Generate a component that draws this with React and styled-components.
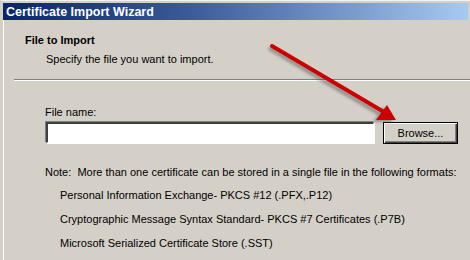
import React from "react";
import styled, { createGlobalStyle } from "styled-components";

const Global = createGlobalStyle`
  html, body { margin: 0; padding: 0; background: #d4d0c8; }
  body { font-family: Tahoma, "Liberation Sans", Arial, sans-serif; font-size: 11px; color: #000; }
`;

const Window = styled.div`
  position: relative;
  width: 470px;
  height: 260px;
  box-sizing: border-box;
  background: #d4d0c8;
  border-top: 1px solid #f4f3ef;
  border-left: 3px solid #d4d0c8;
  box-shadow: inset 1px 0 0 #ffffff;
  overflow: hidden;
  display: flex;
  flex-direction: column;
`;

const TopEdge = styled.div`
  height: 2px;
  background: #d4d0c8;
`;

const TitleBar = styled.div`
  height: 17px;
  margin-right: 2px;
  display: flex;
  align-items: center;
  padding-left: 3px;
  background: linear-gradient(to right, #0a246a 0%, #3a5a9a 40%, #a6caf0 100%);
  color: #fff;
  font-weight: bold;
  font-size: 12.5px;
`;

const Header = styled.div`
  padding: 13px 0 0 22px;
  display: flex;
  flex-direction: column;
  gap: 5px;
`;

const HeaderTitle = styled.div`
  font-weight: bold;
  line-height: 14px;
`;

const HeaderSubtitle = styled.div`
  line-height: 14px;
  padding-left: 21px;
`;

const Separator = styled.div`
  margin: 13px 0 0 11px;
  height: 1px;
  background: #808080;
  border-bottom: 1px solid #ffffff;
`;

const Content = styled.div`
  padding: 24px 0 0 43px;
  display: flex;
  flex-direction: column;
`;

const Label = styled.div`
  line-height: 14px;
  margin-left: -1px;
`;

const FieldRow = styled.div`
  display: flex;
  gap: 9px;
  margin-top: 3px;
`;

const TextInput = styled.div`
  width: 328px;
  height: 21px;
  box-sizing: border-box;
  background: #fff;
  border-top: 2px solid #404040;
  border-left: 2px solid #404040;
  border-right: 1px solid #ffffff;
  border-bottom: 1px solid #ffffff;
  box-shadow: 1px 1px 0 #ffffff, -1px -1px 0 #808080;
`;

const Button = styled.div`
  width: 75px;
  height: 22px;
  box-sizing: border-box;
  border: 1px solid #000;
  background: #d4d0c8;
  box-shadow: inset 1px 1px 0 #ffffff, inset -1px -1px 0 #404040, inset -2px -2px 0 #808080;
  display: flex;
  align-items: center;
  justify-content: center;
  font-size: 11px;
`;

const Note = styled.div`
  margin-top: 21px;
  margin-left: -1px;
  line-height: 14px;
  white-space: pre;
`;

const FormatList = styled.div`
  display: flex;
  flex-direction: column;
  gap: 10px;
  margin-top: 9px;
  padding-left: 14px;
`;

const FormatItem = styled.div`
  line-height: 14px;
  white-space: pre;
`;

const ArrowOverlay = styled.svg`
  position: absolute;
  left: 0;
  top: 0;
  width: 470px;
  height: 260px;
  pointer-events: none;
`;

const formats = [
  "Personal Information Exchange- PKCS #12 (.PFX,.P12)",
  "Cryptographic Message Syntax Standard- PKCS #7 Certificates (.P7B)",
  "Microsoft Serialized Certificate Store (.SST)",
];

export default function App() {
  return (
    <>
      <Global />
      <Window>
        <TopEdge />
        <TitleBar>Certificate Import Wizard</TitleBar>
        <Header>
          <HeaderTitle>File to Import</HeaderTitle>
          <HeaderSubtitle>Specify the file you want to import.</HeaderSubtitle>
        </Header>
        <Separator />
        <Content>
          <Label>File name:</Label>
          <FieldRow>
            <TextInput />
            <Button>Browse...</Button>
          </FieldRow>
          <Note>{"Note:  More than one certificate can be stored in a single file in the following formats:"}</Note>
          <FormatList>
            {formats.map((f) => (
              <FormatItem key={f}>{f}</FormatItem>
            ))}
          </FormatList>
        </Content>
        <ArrowOverlay viewBox="0 0 470 260">
          <defs>
            <filter id="sh" x="-20%" y="-20%" width="140%" height="140%">
              <feGaussianBlur stdDeviation="1.5" />
            </filter>
          </defs>
          <g transform="translate(-3,2)" opacity="0.45" filter="url(#sh)">
            <line x1="269" y1="45" x2="380" y2="111" stroke="#404040" strokeWidth="4" />
            <polygon points="393,119 373,119 384,104" fill="#404040" />
          </g>
          <line x1="269" y1="45" x2="381" y2="111" stroke="#cc0000" strokeWidth="4" strokeLinecap="round" />
          <polygon points="393,119 373,119 384,104" fill="#cc0000" />
        </ArrowOverlay>
      </Window>
    </>
  );
}
